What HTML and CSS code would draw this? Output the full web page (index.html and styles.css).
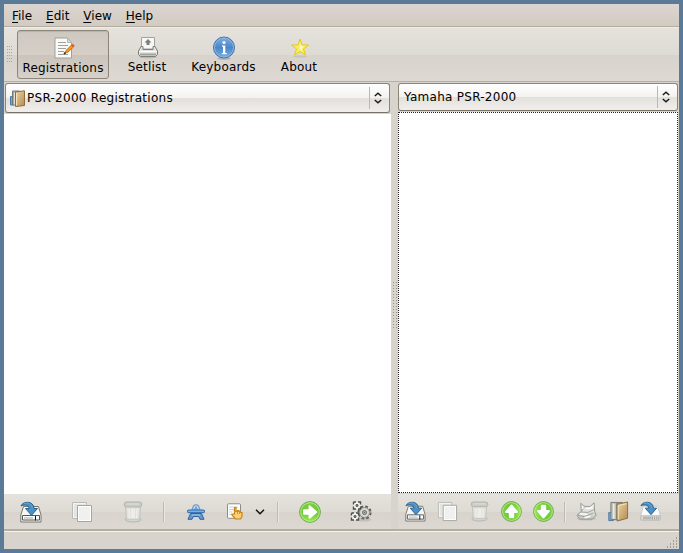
FILE: index.html
```html
<!DOCTYPE html>
<html lang="en">
<head>
<meta charset="utf-8">
<title>PSR-2000 Registrations</title>
<link rel="stylesheet" href="styles.css">
</head>
<body>
<svg class="defs" width="0" height="0" aria-hidden="true">
  <defs>
    <linearGradient id="green" x2="0" y2="1"><stop stop-color="#7fd04a"/><stop offset=".5" stop-color="#6cc632"/><stop offset="1" stop-color="#a0ec58"/></linearGradient>
    <linearGradient id="tan" x2="1" y2="1"><stop stop-color="#eed6a4"/><stop offset="1" stop-color="#b28b50"/></linearGradient>
    <linearGradient id="metal" x2="0" y2="1"><stop stop-color="#fafafa"/><stop offset="1" stop-color="#c4c6c2"/></linearGradient>
    <linearGradient id="blue" x2="0" y2="1"><stop stop-color="#82afe0"/><stop offset=".5" stop-color="#4a86c8"/><stop offset="1" stop-color="#78b0e6"/></linearGradient>
  </defs>
  <symbol id="save" viewBox="0 0 22 22">
    <path d="M3.500 5.500h15l2.500 8.500v7H.8v-7z" fill="#f6f7f5" stroke="#74786f"/>
    <path d="M2.500 14.500h17v4.500h-17z" fill="#fff" stroke="#555953"/>
    <path d="M4 17h9" stroke="#d0d2ce" stroke-width="2"/><path d="M15.500 15v4.500" stroke="#111"/>
    <path d="M1 5C3 -.3 14 -.3 14 7.500h3.500L11.500 14.300 5.500 7.500H9C9 4 5 3.300 1 5z" fill="#4b8fc7" stroke="#2b628e"/>
    <path d="M4 2.600c4-1.500 8 .2 8.300 4.900" fill="none" stroke="#6da6d2"/>
  </symbol>
  <symbol id="save-light" viewBox="0 0 22 22">
    <path d="M3.500 5.500h15l2.500 9v4H1v-4z" fill="#fafafa" stroke="#c9cac6"/>
    <path d="M1 15.500h20v4.500H1z" fill="#e4e4e1" stroke="#b4b6b1"/>
    <path d="M3 17.800h9" stroke="#b5b5b2" stroke-width="3"/><path d="M12.500 17.800h7" stroke="#999" stroke-dasharray="1 1" stroke-width="3"/>
    <path d="M1 5C3 -.3 14 -.3 14 7.500h3.500L11.500 14.300 5.500 7.500H9C9 4 5 3.300 1 5z" fill="#4b8fc7" stroke="#2b628e"/>
    <path d="M4 2.600c4-1.500 8 .2 8.300 4.900" fill="none" stroke="#6da6d2"/>
  </symbol>
  <symbol id="copy" viewBox="0 0 22 22">
    <path d="M1.500 1.500h14v16h-14z" fill="#f4f4f2" stroke="#b9bcb5"/>
    <path d="M3 3h11v13H3z" fill="#e4e5e1"/>
    <path d="M6.500 4.500h14v16h-14z" fill="#fff" stroke="#a3a89e"/>
    <path d="M8 6h11v13H8z" fill="#f0f1ef"/>
  </symbol>
  <symbol id="trash" viewBox="0 0 22 22">
    <ellipse cx="11" cy="18.500" rx="8" ry="2.500" fill="#d4d5d1" stroke="#b4b7b0"/>
    <path d="M3.500 5.500h15l-1 12.500h-13z" fill="#e3e2dd" stroke="#c0c2bc"/>
    <path d="M6.500 8h9v9.500h-9z" fill="#efedea"/><path d="M8.500 8v9M13.500 8v9" stroke="#e3e0dc"/>
    <rect x="2.200" y="1" width="17.600" height="5" rx="2.500" fill="#c9cbc5" stroke="#b1b5ad"/>
    <path d="M5 3h12" stroke="#dfe0db"/>
  </symbol>
  <symbol id="go" viewBox="0 0 22 22">
    <circle cx="11" cy="11" r="10.400" fill="url(#green)" stroke="#71a951"/>
    <circle cx="11" cy="11" r="9.300" fill="none" stroke="#b5ee8c" stroke-width=".9"/>
    <path d="M5 9.200h5.500V5.300l6.800 5.700-6.800 5.700V12.800H5z" fill="#fff" stroke="#fff" stroke-width="2" stroke-linejoin="round"/>
  </symbol>
  <symbol id="style" viewBox="0 0 18 16">
    <path d="M4.500 7.500L6.500 2 8 .8h2L11.500 2l2 5.500M7 7l2-4 2 4z" fill="#c9def3" stroke="#6f9fd0" stroke-width="1.300"/>
    <path d="M3.500 9.500L1 15.300h4L6.300 12.500h5.400L13 15.300h4L14.500 9.500z" fill="#5f98d2" stroke="#2d64a5"/>
    <rect x=".5" y="6" width="17" height="2.700" rx="1" fill="#7cb0e4" stroke="#2d64a5"/>
    <path d="M5 11h8" stroke="#a8cbee"/>
  </symbol>
  <symbol id="touch" viewBox="0 0 17 17">
    <rect x="1.500" y=".8" width="13" height="14.500" rx="1" fill="#fff" stroke="#898d85"/>
    <path d="M3 4h9M3 6.500h5M3 9h3M3 11.500h3" stroke="#cdcfca"/>
    <path d="M8.500 4.500h1.500v4h1.500V7.500h1.500v1h1.500v1H16v4l-1.500 2.500h-5l-3.500-4v-1h2.500z" fill="#fbcf7b" stroke="#cb8410" stroke-width="1.200"/>
    <path d="M11.500 8v3M13.500 9v2" stroke="#cb8410" stroke-width=".8"/>
  </symbol>
  <symbol id="gears" viewBox="0 0 22 22">
    <ellipse cx="14" cy="18.500" rx="7" ry="2" fill="#aaa69f" opacity=".5"/>
    <g fill="#f4f4f1" stroke="#4c4e49">
      <circle cx="14.500" cy="11.500" r="5.800" fill="none" stroke="#5e605a" stroke-width="2.600" stroke-dasharray="2.600 1.955"/>
      <circle cx="14.500" cy="11.500" r="5" fill="#d6d8d2" stroke="#8b8e87"/>
      <circle cx="14.500" cy="11.500" r="2" fill="#c8cac4" stroke="#666"/><circle cx="14.500" cy="11.500" r=".4"/>
      <rect x="3.500" y="1" width="7" height="7" stroke-width="1.400" stroke-dasharray="2.500 2 5 2 5 2 5 2 2.500 0"/>
      <rect x="1.500" y="12" width="7" height="7" stroke-width="1.400" stroke-dasharray="2.500 2 5 2 5 2 5 2 2.500 0"/>
      <circle cx="7" cy="4.500" r="1.100" fill="#999"/><circle cx="5" cy="15.500" r="1.100" fill="#999"/>
    </g>
  </symbol>
  <symbol id="clear" viewBox="0 0 22 22">
    <ellipse cx="11" cy="18.500" rx="10" ry="2" fill="#aaa79f" opacity=".45"/>
    <path d="M5 2.500l3.500 3 6 .5 4.500-4 .5 9 1.500 4-4 4H4L1 15l4.500-4z" fill="url(#metal)" stroke="#92958e"/>
    <path d="M5.500 11L9 6M5.500 11.500l7 .5 6-3M2 15l7 1.500 9-4" fill="none" stroke="#a0a39c"/>
    <path d="M7 5.500v3M11 8l6-1M9 17.500l6-1.500M4 13.500l8 .5" stroke="#fff" stroke-width="1.500"/>
  </symbol>
  <symbol id="folder" viewBox="0 0 22 22">
    <path d="M.8 12h5v8.500h-5z" fill="#72a9da" stroke="#477cae"/>
    <path d="M3 1.500h12v18H3z" fill="#bfc2bb" stroke="#747970"/>
    <path d="M6 3v15.500" stroke="#ecedea" stroke-width="1.600"/>
    <path d="M8.500 2h3v18h-3z" fill="#8c8f86"/>
    <path d="M9.500 3.500l11-2.500V18l-11 3z" fill="url(#tan)" stroke="#8b6e3d"/>
    <path d="M10.800 5v14M11 4.800l8.500-2" stroke="#f5e4bf"/>
  </symbol>
  <symbol id="binder" viewBox="0 0 15 17">
    <path d="M.5 6.500h3v8.500h-3z" fill="#72a9da" stroke="#477cae"/>
    <path d="M2.500 1h7v14h-7z" fill="#a9aca5" stroke="#747970"/>
    <path d="M4.500 2.500v12" stroke="#dfe0dc"/>
    <path d="M5.500 2L14.500 .8v14.700l-9 1z" fill="url(#tan)" stroke="#8b6e3d"/>
    <path d="M6.500 3v12.500" stroke="#f5e4bf"/>
  </symbol>
  <symbol id="updown" viewBox="0 0 10 12"><path d="M1.800 4L5 1.200l3.200 2.800M1.800 8L5 10.800l3.200-2.800" fill="none" stroke="#1b1b1b" stroke-width="1.500"/></symbol>
</svg>

<div class="window">
  <nav class="menu"><span><u>F</u>ile</span><span><u>E</u>dit</span><span><u>V</u>iew</span><span><u>H</u>elp</span></nav>

  <header class="toolbar">
    <i class="grip"></i>
    <button class="tool active">
      <svg width="24" height="24" viewBox="0 0 24 24">
        <path d="M4 2h12.500l4 4.500v15.500H4z" fill="#fafaf9" stroke="#9da199"/>
        <path d="M16.500 2V6.500h4z" fill="#dadcd8" stroke="#b5b8b1"/>
        <path d="M7 6.500h8M7 9.500h10M7 12.500h8M7 15.500h6M7 18.500h10" stroke="#a0a39c"/>
        <path d="M13.500 17.500l2-3.500 5-5 2 2-5.500 5z" fill="#f99a16" stroke="#c8640a" stroke-width=".9"/>
        <path d="M21 8.500l2 2" stroke="#e0562f" stroke-width="2"/><path d="M13 18l1.500-.7-.8-.8z" stroke="#332"/>
      </svg>
      <span>Registrations</span>
    </button>
    <button class="tool setlist">
      <svg width="24" height="24" viewBox="0 0 24 24">
        <ellipse cx="13" cy="21" rx="9" ry="1.500" fill="#aaa59c" opacity=".6"/>
        <path d="M6.500 1.500h13V13h-13z" fill="#f8f8f7" stroke="#a0a39d"/>
        <path d="M13 3l3.500 3.500h-2V9h-3V6.500h-2z" fill="#7c7e79"/>
        <path d="M6 10.500l-2.500 4.500v3.500l2 2h15l2-2V15L20 10.500h-2v3H8v-3z" fill="#e2e3e0" stroke="#7c7f79"/>
        <path d="M4 15.500h18" stroke="#fff"/><path d="M5 18.500h16" stroke="#a1a39d" stroke-width="2"/>
      </svg>
      <span>Setlist</span>
    </button>
    <button class="tool keyboards">
      <svg width="24" height="24" viewBox="0 0 24 24">
        <ellipse cx="12" cy="22.500" rx="7" ry="1.300" fill="#938e85" opacity=".5"/>
        <circle cx="12" cy="11.500" r="10.500" fill="url(#blue)" stroke="#3c6ea9"/>
        <circle cx="12" cy="11.500" r="9.500" fill="none" stroke="#8bb6e3"/>
        <circle cx="12" cy="6.500" r="1.600" fill="#fff"/><path d="M10 9.500h3.300v7.500h1.500v1.200h-5v-1.200H11V10.700h-1z" fill="#fff"/>
      </svg>
      <span>Keyboards</span>
    </button>
    <button class="tool about">
      <svg width="24" height="24" viewBox="0 0 24 24">
        <ellipse cx="13" cy="20.500" rx="7" ry="1" fill="#b6b1a8" opacity=".5"/>
        <path d="M13 3l2 6h6.500l-5 4 2 6-5.500-3.500L7.500 19l2-6-5-4H11z" fill="#f8ee66" stroke="#e5ca10"/>
        <path d="M13 6.500l1.200 3.800h3.300l-3 2 .8 3-2.300-2z" fill="#fffbc5"/>
      </svg>
      <span>About</span>
    </button>
  </header>

  <main class="panes">
    <section class="pane left">
      <div class="combo"><svg width="15" height="17"><use href="#binder"/></svg><span>PSR-2000 Registrations</span><i class="arrows"><svg width="10" height="12"><use href="#updown"/></svg></i></div>
      <div class="list"></div>
      <div class="actions">
        <b><svg><use href="#save"/></svg></b><b><svg><use href="#copy"/></svg></b><b><svg><use href="#trash"/></svg></b>
        <i class="sep"></i>
        <b><svg class="style"><use href="#style"/></svg></b>
        <b class="touch"><svg><use href="#touch"/></svg></b>
        <b class="drop"><svg viewBox="0 0 10 6"><path d="M1 .8l4 4 4-4" fill="none" stroke="#111" stroke-width="1.500"/></svg></b>
        <i class="sep"></i>
        <b><svg><use href="#go"/></svg></b><b><svg><use href="#gears"/></svg></b>
      </div>
    </section>
    <div class="splitter"><i></i></div>
    <section class="pane right">
      <div class="combo"><span>Yamaha PSR-2000</span><i class="arrows"><svg width="10" height="12"><use href="#updown"/></svg></i></div>
      <div class="list"></div>
      <div class="actions">
        <b><svg><use href="#save"/></svg></b><b><svg><use href="#copy"/></svg></b><b><svg><use href="#trash"/></svg></b>
        <b><svg class="up"><use href="#go"/></svg></b><b><svg class="down"><use href="#go"/></svg></b>
        <i class="sep"></i>
        <b><svg><use href="#clear"/></svg></b><b><svg><use href="#folder"/></svg></b><b><svg><use href="#save-light"/></svg></b>
      </div>
    </section>
  </main>
  <footer class="status">
    <svg width="12" height="12" viewBox="0 0 12 12"><path d="M9 1h1M6 4h4M3 7h7M0 10h10" stroke="#8f8b82" stroke-width="1.300" stroke-dasharray="1 2"/></svg>
  </footer>
</div>
</body>
</html>
```
FILE: styles.css
```css
* { box-sizing: border-box; }
body {
  margin: 0;
  font: 12px/15px "DejaVu Sans", sans-serif;
  color: #000;
}
.defs { position: absolute; }
.window {
  display: flex;
  flex-direction: column;
  width: 683px;
  height: 553px;
  border: 4px solid #5b7a98;
  background: #d8d3cc;
  overflow: hidden;
}
.menu {
  display: flex;
  gap: 14px;
  height: 23px;
  padding: 5px 8px 0;
  border-bottom: 1px solid #b4ac9f;
  background: linear-gradient(#dcd6d0, #d2cbc3);
}
.menu u { text-underline-offset: 2px; text-decoration-thickness: 1px; }
.toolbar {
  display: flex;
  align-items: flex-start;
  height: 55px;
  padding: 2px 0 0 3px;
  border-top: 1px solid #efedea;
  border-bottom: 1px solid #b7b0a2;
  background: linear-gradient(#e5e2dd, #dedad4 50%, #d9d3cd 51%, #ddd8d2);
}
.grip {
  width: 5px;
  height: 17px;
  margin: 16px 5px 0 0;
  background: radial-gradient(circle at .5px .5px, #aaa69d .7px, transparent .8px) 0 0 / 2px 3px;
}
.tool {
  display: flex;
  flex-direction: column;
  align-items: center;
  height: 49px;
  padding: 5px 0 0;
  border: 1px solid transparent;
  border-radius: 3px;
  background: none;
  font: inherit;
  letter-spacing: .2px;
}
.tool svg { flex: none; }
.active {
  width: 92px;
  border-color: #8d877b;
  background: linear-gradient(#cfc8c0, #d5cfc8 50%, #cbc4bb 51%, #d6d0c9);
  box-shadow: inset 0 1px 1px #b9b2a8;
}
.tool.active span { margin-top: 1px; }
.setlist { width: 76px; }
.keyboards { width: 77px; }
.about { width: 74px; }
.panes { display: flex; flex: 1; min-height: 0; }
.pane { display: flex; flex-direction: column; }
.left { width: 387px; padding-top: 1px; }
.right { width: 281px; padding-top: 1px; }
.combo {
  display: flex;
  align-items: center;
  height: 30px;
  margin: 0 1px 1px;
  padding: 0 6px 0 4px;
  border: 1px solid #8b8578;
  border-bottom-color: #777166;
  border-radius: 3px;
  background: linear-gradient(#fff, #f3f2f0 50%, #e3e0db 52%, #f1efed);
  letter-spacing: .27px;
}
.combo > svg { margin-right: 2px; }
.right .combo { height: 28px; margin: 0 1px 1px 0; padding-left: 5px; }
.arrows {
  display: flex;
  align-items: center;
  height: 22px;
  margin-left: auto;
  padding-left: 3px;
  border-left: 1px solid #bdb7ac;
}
.list { flex: 1; background: #fff; }
.right .list { border: 1px dotted #222; margin: 0 1px 1px 0; }
.actions {
  display: flex;
  align-items: center;
  height: 35px;
  padding-left: 1px;
  background: linear-gradient(#e5e2dd, #dedad4 50%, #d9d3cd 51%, #ddd8d2);
}
.actions b { display: flex; justify-content: center; width: 51px; }
.actions svg { width: 22px; height: 22px; }
.right .actions b { width: 32px; }
.right .actions svg { width: 21px; height: 21px; }
.actions .style { width: 18px; height: 16px; }
.actions .touch { width: 27px; }
.touch svg { width: 17px; height: 17px; }
.actions .drop { width: 24px; }
.drop svg { width: 10px; height: 6px; }
.up { transform: rotate(-90deg); }
.down { transform: rotate(90deg); }
.sep {
  width: 2px;
  height: 20px;
  margin: 0 5px;
  border-left: 1px solid #c0bab0;
  border-right: 1px solid #eae7e3;
}
.right .sep { margin-right: 4px; }
.splitter {
  display: flex;
  justify-content: center;
  align-items: center;
  width: 7px;
}
.splitter i {
  width: 4px;
  height: 48px;
  background: radial-gradient(circle at .5px .5px, #99958c .7px, transparent .8px) 0 0 / 3px 3px;
}
.status {
  display: flex;
  align-items: flex-end;
  justify-content: flex-end;
  height: 20px;
  border-top: 2px solid #b4ada1;
  box-shadow: inset 0 1px #f5f3f1;
}
```
